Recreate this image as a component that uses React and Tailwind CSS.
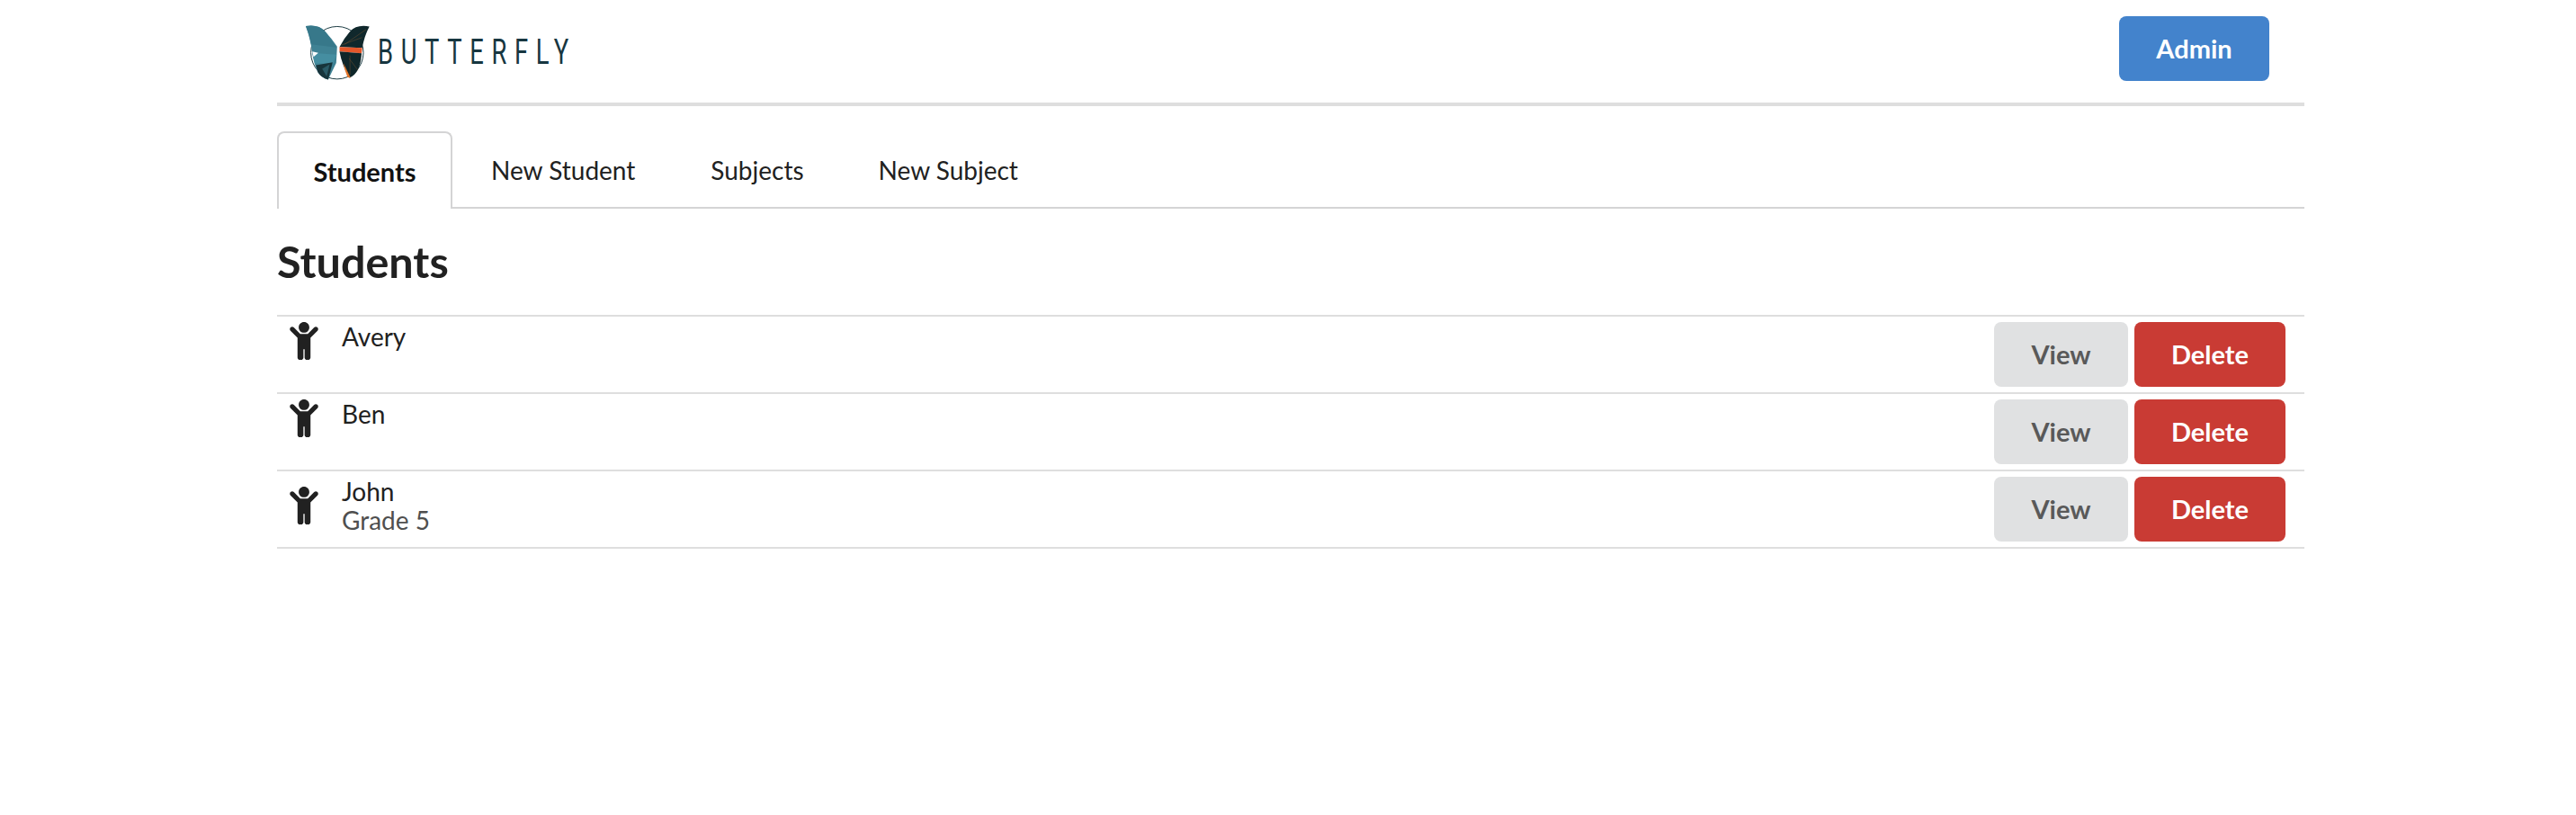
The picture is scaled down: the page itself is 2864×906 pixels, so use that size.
import React from "react";
import { FaChild } from "react-icons/fa";

function Logo() {
  return (
    <svg viewBox="0 0 250 225" className="w-[83px] h-[75px] shrink-0">
      <circle cx="135" cy="116" r="88" fill="none" stroke="#1d3c44" strokeWidth="3" />
      <path d="M30 27 Q72 20 95 45 Q118 70 135 95 L132 150 L105 206 Q82 200 70 180 Q58 155 52 118 Q46 70 30 27 Z" fill="#3f8294" />
      <path d="M30 27 Q72 20 95 45 L133 98 L48 88 Q42 55 30 27 Z" fill="#37788a" />
      <path d="M52 116 L133 122 L122 152 L60 152 Z" fill="#458ea1" />
      <path d="M64 158 L120 148 L105 206 Q82 200 70 180 Z" fill="#17343b" />
      <path d="M85 170 L110 155 L100 195 Z" fill="#2a5a66" />
      <path d="M52 112 L72 116 L56 130 Z" fill="#ffffff" />
      <path d="M243 28 Q200 20 178 45 Q158 68 143 97 L219 100 Q226 60 243 28 Z" fill="#10282c" />
      <path d="M143 97 L219 100 L217 118 L143 112 Z" fill="#e4572a" />
      <path d="M143 112 L217 118 Q215 150 205 172 Q195 192 176 200 Q152 160 143 112 Z" fill="#0f2629" />
      <path d="M156 150 L180 200 L170 198 Q160 175 156 150 Z" fill="#e4762a" />
      <path d="M160 88 L232 38 M175 135 L205 175 M150 90 L218 65 M178 125 L178 190" stroke="#8a5a30" strokeWidth="1.2" fill="none" />
    </svg>
  );
}

function Row({ name, sub }) {
  return (
    <div className="flex justify-between items-start border-b-2 border-[#dedede] pt-[6px] pb-[6px] pl-[14px] pr-[21px] h-[86px]">
      <div className="flex items-center gap-[26px]">
        <FaChild className="w-[32px] h-[42px] text-[#212121] shrink-0" />
        <div className="self-start leading-[32px]">
          <div className="text-[#212121]">{name}</div>
          {sub && <div className="text-[#4f4f4f]">{sub}</div>}
        </div>
      </div>
      <div className="flex gap-[7px]">
        <button className="w-[149px] h-[72px] rounded-[8px] bg-[#e0e1e2] text-[#595959] font-bold text-[29px]">View</button>
        <button className="w-[168px] h-[72px] rounded-[8px] bg-[#c93b34] text-white font-bold text-[29px]">Delete</button>
      </div>
    </div>
  );
}

export default function App() {
  return (
    <div className="bg-white min-h-[906px] font-['Lato',sans-serif] text-[28px] text-[#212121]">
      <div className="w-[2254px] ml-[308px]">
        <header className="flex items-center justify-between h-[118px] border-b-4 border-[#dedede] pl-[22px] pr-[39px] pb-[6px]">
          <div className="flex items-center mt-[7px]">
            <Logo />
            <span className="ml-[7px] font-['Roboto',sans-serif] font-normal text-[38px] leading-none tracking-[12px] text-[#173640] origin-left scale-x-[0.72] whitespace-nowrap -mr-[80px]">
              BUTTERFLY
            </span>
          </div>
          <button className="w-[167px] h-[72px] rounded-[8px] bg-[#4383cc] text-white font-bold text-[29px]">Admin</button>
        </header>
        <nav className="flex mt-[28px] h-[86px] border-b-2 border-[#d4d4d5]">
          <div className="h-[86px] w-[195px] pt-[2px] flex items-center justify-center rounded-t-[8px] border-2 border-b-0 border-[#d4d4d5] bg-white font-bold text-[#111111] text-[29px] relative">
            Students
          </div>
          <div className="h-[84px] pt-[2px] flex items-center pl-[43px] pr-[44px]">New Student</div>
          <div className="h-[84px] pt-[2px] flex items-center pl-[40px] pr-[41px]">Subjects</div>
          <div className="h-[84px] pt-[2px] flex items-center pl-[42px] pr-[42px]">New Subject</div>
        </nav>
        <h1 className="text-[48.5px] font-bold leading-[58px] mt-[29px] mb-[31px] text-[#212121]">Students</h1>
        <div className="border-t-2 border-[#dedede]">
          <Row name="Avery" />
          <Row name="Ben" />
          <Row name="John" sub="Grade 5" />
        </div>
      </div>
    </div>
  );
}
